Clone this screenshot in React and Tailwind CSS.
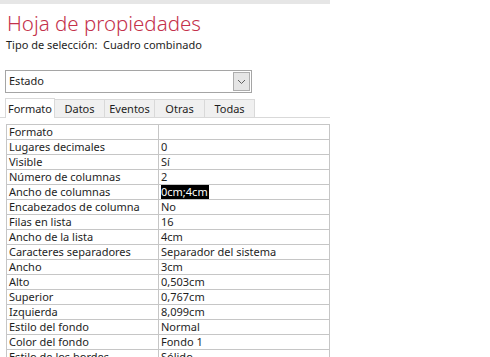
import React from 'react';

const rows = [
  ['Formato', ''],
  ['Lugares decimales', '0'],
  ['Visible', 'Sí'],
  ['Número de columnas', '2'],
  ['Ancho de columnas', '0cm;4cm', true],
  ['Encabezados de columna', 'No'],
  ['Filas en lista', '16'],
  ['Ancho de la lista', '4cm'],
  ['Caracteres separadores', 'Separador del sistema'],
  ['Ancho', '3cm'],
  ['Alto', '0,503cm'],
  ['Superior', '0,767cm'],
  ['Izquierda', '8,099cm'],
  ['Estilo del fondo', 'Normal'],
  ['Color del fondo', 'Fondo 1'],
  ['Estilo de los bordes', 'Sólido'],
];

const tabs = ['Formato', 'Datos', 'Eventos', 'Otras', 'Todas'];

export default function App() {
  return (
    <div className="w-[490px] h-[357px] overflow-hidden bg-white text-[#1e1e1e] font-['Noto_Sans','Open_Sans',sans-serif]">
      <div className="w-[330px] h-[357px] flex flex-col">
        <div className="h-[4px] shrink-0 bg-[#e6e6e6]" />
        <h1 className="pl-[7px] mt-[8px] text-[20.5px] leading-[22px] font-light text-[#c4314b]">Hoja de propiedades</h1>
        <div className="pl-[6px] mt-[4px] text-[11px] leading-[14px]">Tipo de selección:&nbsp; Cuadro combinado</div>

        {/* combo */}
        <div className="mt-[18px] ml-[5px] w-[247px] h-[23px] shrink-0 border border-[#a5a5a5] flex items-center">
          <span className="flex-1 pl-[3px] text-[11px]">Estado</span>
          <div className="w-[17px] h-[19px] mr-[1px] border border-[#adadad] bg-[#e5e5e5] flex items-center justify-center">
            <svg width="9" height="6" viewBox="0 0 9 6">
              <path d="M1 1l3.5 3.5L8 1" stroke="#606060" strokeWidth="1" fill="none" />
            </svg>
          </div>
        </div>

        {/* tabs */}
        <div className="mt-[6px] flex items-end border-b border-[#d9d9d9] h-[19px] shrink-0">
          {tabs.map((t, i) => (
            <div
              key={t}
              className={
                i === 0
                  ? 'ml-[5px] w-[50px] h-[20px] -mb-px pt-px bg-white border border-b-0 border-[#d9d9d9] text-[11px] flex items-center justify-center'
                  : 'w-[50px] h-[18px] pt-px bg-[#f0f0f0] border border-l-0 border-b-0 border-[#d9d9d9] text-[11px] flex items-center justify-center'
              }
            >
              {t}
            </div>
          ))}
        </div>

        {/* property grid */}
        <div className="mt-[6px] ml-[6px] w-[324px] border-t border-l border-[#c6c6c6] text-[11px]">
          {rows.map(([k, v, sel]) => (
            <div key={k} className="flex h-[15px] border-b border-[#c6c6c6]">
              <div className="w-[152px] pl-[2px] border-r border-[#c6c6c6] leading-[14px] whitespace-nowrap overflow-hidden">{k}</div>
              <div className="flex-1 pl-[2px] border-r border-[#c6c6c6] leading-[14px] whitespace-nowrap overflow-hidden">
                {sel ? <span className="bg-black text-white pr-px">{v}</span> : v}
              </div>
            </div>
          ))}
        </div>
      </div>
    </div>
  );
}
